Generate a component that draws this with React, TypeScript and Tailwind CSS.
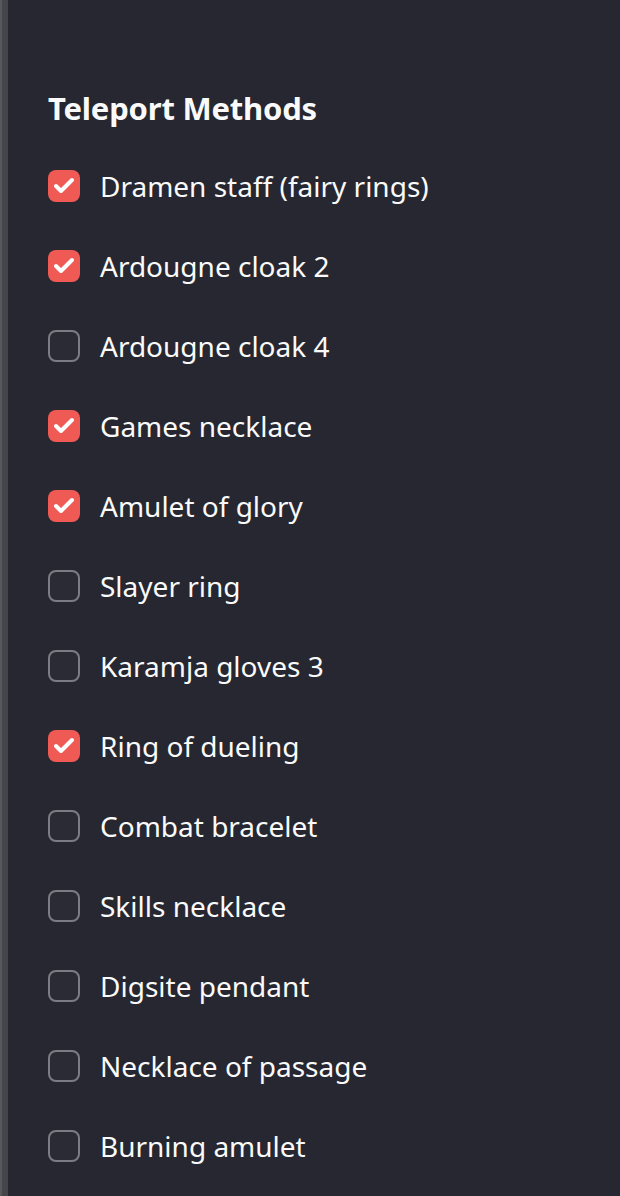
import { Check } from 'lucide-react';

const METHODS: { label: string; checked: boolean }[] = [
  { label: 'Dramen staff (fairy rings)', checked: true },
  { label: 'Ardougne cloak 2', checked: true },
  { label: 'Ardougne cloak 4', checked: false },
  { label: 'Games necklace', checked: true },
  { label: 'Amulet of glory', checked: true },
  { label: 'Slayer ring', checked: false },
  { label: 'Karamja gloves 3', checked: false },
  { label: 'Ring of dueling', checked: true },
  { label: 'Combat bracelet', checked: false },
  { label: 'Skills necklace', checked: false },
  { label: 'Digsite pendant', checked: false },
  { label: 'Necklace of passage', checked: false },
  { label: 'Burning amulet', checked: false },
];

export default function App() {
  return (
    <div
      className="flex w-[620px] h-[1196px] bg-[#262730] text-[#fafafa] overflow-hidden"
      style={{ fontFamily: '"Noto Sans", "Open Sans", sans-serif' }}
    >
      <div className="w-[2px] bg-[#57575c]" />
      <div className="w-[6px] bg-[#45464c]" />
      <div className="flex-1 pl-[40px] pt-[86px]">
        <h3 className="text-[31px] font-bold leading-[44px] tracking-[-0.2px]">Teleport Methods</h3>
        <div className="mt-[16px] flex flex-col">
          {METHODS.map(m => (
            <label key={m.label} className="flex items-center h-[80px] gap-[20px] cursor-pointer">
              {m.checked ? (
                <span className="w-[32px] h-[32px] rounded-[8px] bg-[#f05a55] flex items-center justify-center shrink-0">
                  <Check size={24} strokeWidth={4} color="#ffffff" />
                </span>
              ) : (
                <span className="w-[32px] h-[32px] rounded-[8px] border-2 border-[#7b7c84] bg-[#2a2b34] shrink-0" />
              )}
              <span className="text-[28px] leading-[40px]">{m.label}</span>
            </label>
          ))}
        </div>
      </div>
    </div>
  );
}
